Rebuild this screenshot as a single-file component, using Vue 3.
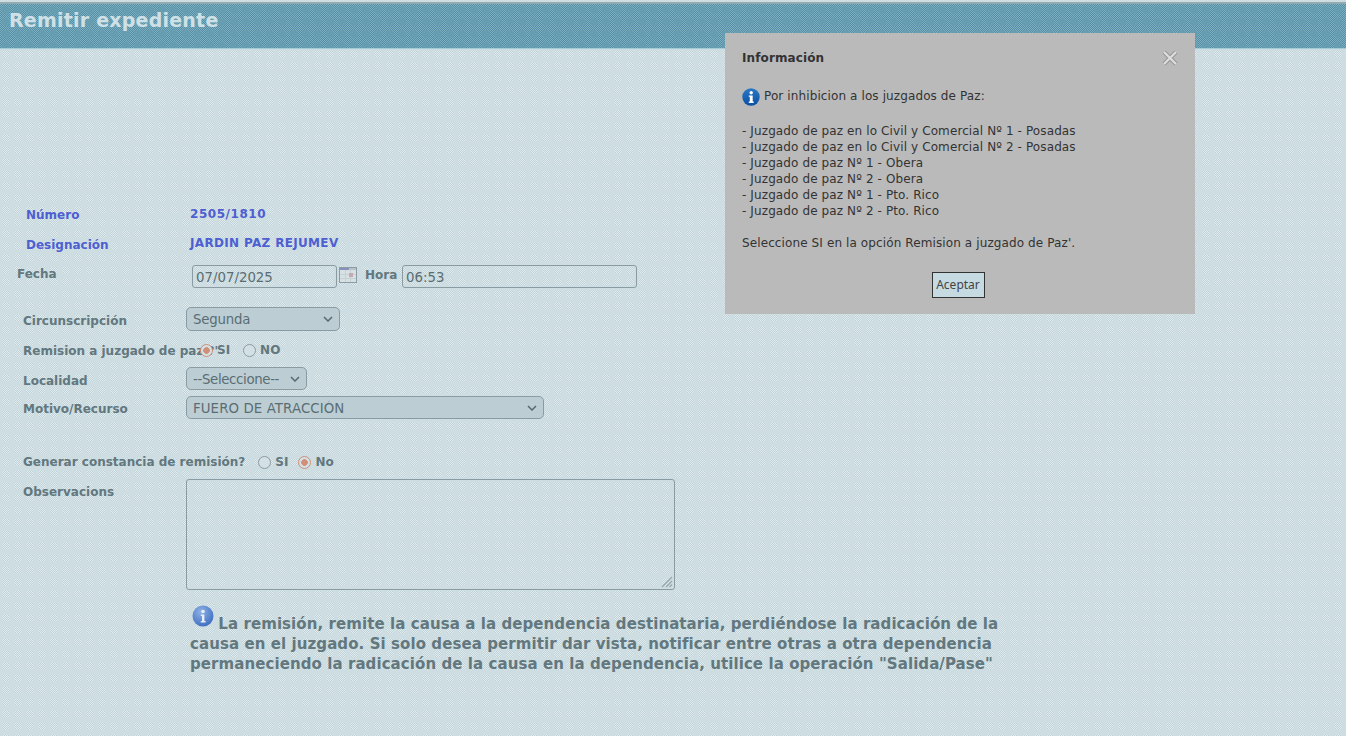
<script setup>
const modalLines = [
  '- Juzgado de paz en lo Civil y Comercial Nº 1 - Posadas',
  '- Juzgado de paz en lo Civil y Comercial Nº 2 - Posadas',
  '- Juzgado de paz Nº 1 - Obera',
  '- Juzgado de paz Nº 2 - Obera',
  '- Juzgado de paz Nº 1 - Pto. Rico',
  '- Juzgado de paz Nº 2 - Pto. Rico'
]
</script>

<template>
  <div class="page">
    <header class="bar"><h1>Remitir expediente</h1></header>

    <form class="form" @submit.prevent>
      <div class="row row-num">
        <span class="lab blue lab-26">Número</span>
        <span class="val val-num">2505/1810</span>
      </div>
      <div class="row row-des">
        <span class="lab blue lab-26">Designación</span>
        <span class="val val-des">JARDIN PAZ REJUMEV</span>
      </div>
      <div class="row row-fecha">
        <span class="lab lab-fecha">Fecha</span>
        <input class="field f-date" value="07/07/2025" />
        <svg class="cal" width="18" height="16" viewBox="0 0 18 16">
          <rect x="0.5" y="0.5" width="17" height="15" fill="#d7e1e4" stroke="#8b9ca2" />
          <rect x="1" y="1" width="9" height="2" fill="#8a90bd" />
          <rect x="10" y="1" width="7" height="2" fill="#b7c3c8" />
          <path d="M1 7.5h16M1 11.5h16M6.5 3v12M11.5 3v12" stroke="#c5d1d5" fill="none" />
          <rect x="10" y="6" width="4" height="4" fill="#c4a9b2" />
        </svg>
        <span class="lab lab-hora">Hora</span>
        <input class="field f-time" value="06:53" />
      </div>
      <div class="row row-circ">
        <span class="lab lab-23 lab-low">Circunscripción</span>
        <select class="sel s-circ"><option>Segunda</option></select>
      </div>
      <div class="row row-rem">
        <span class="lab lab-23">Remision a juzgado de paz ?'</span>
        <label class="opt opt-rem-si"><i class="radio on"></i><b>SI</b></label>
        <label class="opt opt-rem-no"><i class="radio"></i><b>NO</b></label>
      </div>
      <div class="row row-loc">
        <span class="lab lab-23 lab-low">Localidad</span>
        <select class="sel s-loc"><option>--Seleccione--</option></select>
      </div>
      <div class="row row-mot">
        <span class="lab lab-23">Motivo/Recurso</span>
        <select class="sel s-mot"><option>FUERO DE ATRACCIÓN</option></select>
      </div>
      <div class="row row-gen">
        <span class="lab lab-23 lab-gen">Generar constancia de remisión?</span>
        <label class="opt opt-gen-si"><i class="radio"></i><b>SI</b></label>
        <label class="opt opt-gen-no"><i class="radio on"></i><b>No</b></label>
      </div>
      <div class="row row-obs">
        <span class="lab lab-23 lab-obs">Observacions</span>
        <div class="area-wrap">
          <textarea class="area"></textarea>
          <svg class="grip" width="12" height="12" viewBox="0 0 12 12">
            <path d="M1 11L11 1M5 11l6-6M8.5 11L11 8.5" stroke="#97a7ac" stroke-width="1.3" fill="none" />
          </svg>
        </div>
      </div>
      <p class="note">
        <svg class="note-ico" width="22" height="22" viewBox="0 0 22 22">
          <defs>
            <radialGradient id="ng" cx="40%" cy="30%" r="75%">
              <stop offset="0" stop-color="#8fb2e6" />
              <stop offset="1" stop-color="#3c6cc0" />
            </radialGradient>
          </defs>
          <circle cx="11" cy="11" r="10.5" fill="url(#ng)" />
          <circle cx="11" cy="6.5" r="1.8" fill="#e8eef5" />
          <path d="M8.8 9.5h3.6v6.5h1.2v1.5H8.8V16H10v-5H8.8z" fill="#e8eef5" />
        </svg>
        La remisión, remite la causa a la dependencia destinataria, perdiéndose la radicación de la causa en el juzgado. Si solo desea permitir dar vista, notificar entre otras a otra dependencia permaneciendo la radicación de la causa en la dependencia, utilice la operación "Salida/Pase"
      </p>
    </form>

    <aside class="modal">
      <div class="m-head">
        <strong>Información</strong>
        <svg class="m-close" width="18" height="18" viewBox="0 0 18 18">
          <path d="M3 3l12 12M15 3L3 15" stroke="#989898" stroke-width="4.4" fill="none" />
          <path d="M3 3l12 12M15 3L3 15" stroke="#dedede" stroke-width="2.2" fill="none" />
        </svg>
      </div>
      <div class="m-first">
        <svg width="18" height="18" viewBox="0 0 18 18">
          <defs>
            <linearGradient id="mg" x1="0" y1="0" x2="0" y2="1">
              <stop offset="0" stop-color="#2a79c6" />
              <stop offset="1" stop-color="#0a4fa3" />
            </linearGradient>
          </defs>
          <circle cx="9" cy="9" r="8.7" fill="url(#mg)" />
          <circle cx="9.2" cy="4.7" r="1.7" fill="#fff" />
          <path d="M6.8 7.4h3.9v6.2h1v1.3H6.8v-1.3h1V8.7h-1z" fill="#fff" />
        </svg>
        <span class="m-first-text">Por inhibicion a los juzgados de Paz:</span>
      </div>
      <div class="m-list">
        <div v-for="l in modalLines" :key="l">{{ l }}</div>
      </div>
      <div class="m-last">Seleccione SI en la opción Remision a juzgado de Paz'.</div>
      <div class="m-foot"><button type="button" class="m-btn">Aceptar</button></div>
    </aside>
  </div>
</template>

<style>
html, body { margin: 0; padding: 0; }
</style>

<style scoped>
.page {
  position: relative;
  width: 1346px;
  height: 736px;
  box-sizing: border-box;
  padding-top: 2px;
  overflow: hidden;
  font-family: "DejaVu Sans", sans-serif;
  background-color: #cddde1;
  background-image:
    radial-gradient(circle at 6px 6px, transparent 3.4px, #cddde1 4.6px),
    conic-gradient(#bdd0d6 25%, #e3edef 0 50%, #bdd0d6 0 75%, #e3edef 0);
  background-size: 12px 12px, 2px 2px;
}
.bar {
  height: 47px;
  box-sizing: border-box;
  border-top: 2px solid #94aab2;
  border-bottom: 1px solid #a5cdd9;
  background-color: #669db1;
  background-image:
    radial-gradient(circle at 6px 6px, #669db1 3.4px, transparent 4.6px),
    conic-gradient(#558ea4 25%, #7db0c1 0 50%, #558ea4 0 75%, #7db0c1 0);
  background-size: 12px 12px, 2px 2px;
}
.bar h1 {
  margin: 0;
  padding: 4px 0 0 9px;
  font-size: 19px;
  line-height: 24px;
  font-weight: 700;
  letter-spacing: 0.22px;
  color: #cfe1e6;
}
.form {
  margin-top: 156px;
  width: 1100px;
  display: flex;
  flex-direction: column;
}
.row { display: flex; align-items: center; }
.lab {
  font-size: 12px;
  font-weight: 700;
  color: #62777e;
  white-space: nowrap;
  position: relative;
  top: 1px;
}
.lab-low { top: 2px; }
.blue { color: #4e5fd2; }
.lab-26 { margin-left: 26px; width: 164px; }
.lab-23 { margin-left: 23px; width: 163px; }
.val { font-size: 12px; font-weight: 700; color: #4e5fd2; position: relative; }
.val-num { letter-spacing: 0.55px; }
.val-des { top: -1px; letter-spacing: 0.33px; }
.row-num { height: 30px; margin-top: -6px; }
.row-des { height: 30px; }
.row-fecha { height: 23px; margin-top: 6px; }
.lab-fecha { margin-left: 17px; width: 175px; top: -3px; }
.field {
  box-sizing: border-box;
  height: 23px;
  padding: 2px 3px 0;
  border: 1px solid #8a9ca2;
  border-radius: 3px;
  background: transparent;
  font: 13.33px "DejaVu Sans", sans-serif;
  color: #5a6d73;
}
.f-date { width: 145px; }
.cal { margin: -4px 0 0 2px; }
.lab-hora { margin-left: 8px; width: 37px; top: -2px; }
.f-time { width: 235px; }
.row-circ { height: 24px; margin-top: 19px; }
.sel {
  box-sizing: border-box;
  padding: 0 0 0 6px;
  border: 1px solid #8a9ca2;
  border-radius: 5px;
  appearance: none;
  background-color: #bccdd3;
  background-image: url("data:image/svg+xml,%3Csvg xmlns='http://www.w3.org/2000/svg' width='10' height='6'%3E%3Cpath d='M1 1l4 4 4-4' fill='none' stroke='%23566a70' stroke-width='1.5'/%3E%3C/svg%3E");
  background-repeat: no-repeat;
  background-position: right 6px center;
  font: 13.33px "DejaVu Sans", sans-serif;
  color: #5a6d73;
}
.s-circ { width: 154px; height: 24px; letter-spacing: -0.2px; }
.s-loc { width: 121px; height: 23px; padding-top: 2px; letter-spacing: -0.35px; }
.s-mot { width: 358px; height: 23px; padding-top: 2px; letter-spacing: 0.1px; }
.row-rem { height: 20px; margin-top: 9px; }
.opt { display: inline-flex; align-items: center; font-size: 12px; color: #62777e; position: relative; }
.radio {
  display: inline-block;
  box-sizing: border-box;
  width: 13px;
  height: 13px;
  border: 1.8px solid #8b9ca2;
  border-radius: 50%;
  background: #d3e1e4;
  margin-right: 4px;
}
.radio.on {
  border-color: #d28f78;
  background: radial-gradient(circle, #d28f78 3px, #d3e1e4 3.6px);
}
.opt-rem-si { margin-left: 14px; }
.opt-rem-no { margin-left: 13px; }
.row-loc { height: 23px; margin-top: 7px; }
.row-mot { height: 23px; margin-top: 6px; }
.row-gen { height: 20px; margin-top: 32px; }
.lab-gen { width: auto; }
.opt-gen-si { margin-left: 13px; top: 1px; }
.opt-gen-no { margin-left: 10px; top: 1px; }
.row-obs { height: 111px; margin-top: 8px; align-items: flex-start; }
.lab-obs { margin-top: 5px; }
.area-wrap { position: relative; width: 489px; height: 111px; }
.area {
  display: block;
  box-sizing: border-box;
  width: 489px;
  height: 111px;
  margin: 0;
  border: 1px solid #8a9ca2;
  border-radius: 3px;
  background: transparent;
  resize: none;
}
.grip { position: absolute; right: 2px; bottom: 2px; }
.note {
  margin: 15px 0 0 190px;
  width: 820px;
  font-size: 15px;
  line-height: 20px;
  font-weight: 700;
  letter-spacing: 0.08px;
  color: #62777e;
}
.note-ico { margin: 0 -1px 0 2px; vertical-align: 2px; }
.modal {
  position: absolute;
  top: 33px;
  left: 725px;
  width: 470px;
  height: 281px;
  box-sizing: border-box;
  padding: 17px 17px 0;
  background: #bababa;
  font-size: 12px;
  line-height: 16px;
  letter-spacing: 0.11px;
  color: #333;
}
.m-head { display: flex; justify-content: space-between; align-items: center; height: 16px; }
.m-close { margin-right: -1px; }
.m-first { display: flex; align-items: center; gap: 4px; margin-top: 22px; height: 18px; }
.m-first-text { margin-top: -2px; }
.m-list { margin-top: 17px; }
.m-last { margin-top: 16px; }
.m-foot { display: flex; justify-content: center; margin: 21px 4px 0 0; }
.m-btn {
  box-sizing: border-box;
  width: 53px;
  height: 26px;
  padding: 0 0 2px;
  border: 1px solid #333;
  background: #c6dae2;
  font: 12px "Noto Sans", "Liberation Sans", sans-serif;
  color: #444;
}
</style>
